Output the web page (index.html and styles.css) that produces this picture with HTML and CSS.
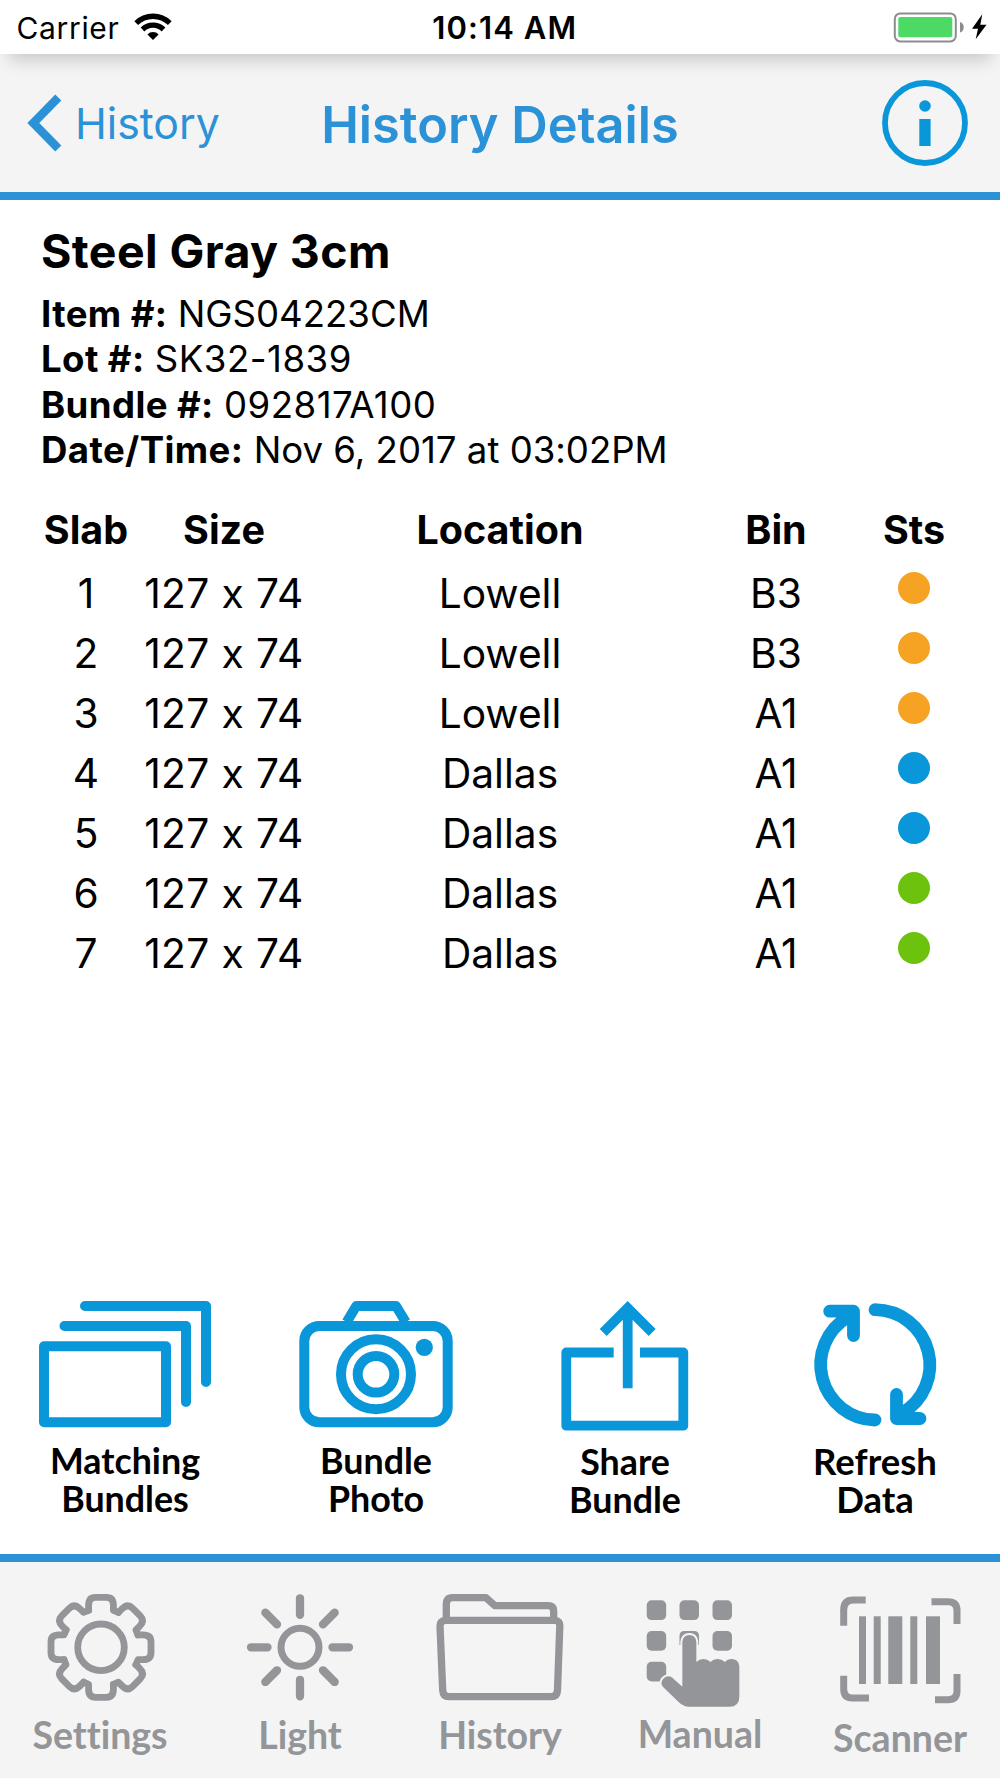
FILE: index.html
```
<!DOCTYPE html>
<html lang="en">
<head>
    <meta charset="UTF-8">
    <meta name="viewport" content="width=device-width, initial-scale=1.0">
    <title>History Details</title>
    <link rel="stylesheet" href="styles.css">
</head>
<body>
    <div class="status-bar">
        <div class="carrier">
            <span>Carrier</span>
            <svg class="wifi" width="40" height="28" viewBox="0 0 40 28">
                <path d="M3.2 10.2a23.8 23.8 0 0 1 33.6 0M9.5 16.5a14.9 14.9 0 0 1 21 0" fill="none" stroke="#000" stroke-width="5.3"/>
                <path d="M20 27l-5.6-5.6a7.9 7.9 0 0 1 11.2 0z"/>
            </svg>
        </div>
        <div class="time">10:14 AM</div>
        <svg class="battery" width="100" height="34" viewBox="0 0 100 34">
            <rect x="2.8" y="3.4" width="61" height="28" rx="5.5" fill="#fff" stroke="#8e8b8f" stroke-width="2"/>
            <rect x="6.3" y="7" width="54" height="20.3" rx="2" fill="#4cd964"/>
            <path d="M68 12c5 1.5 5 9 0 10.5z" fill="#8e8b8f"/>
            <path d="M90.3 4.3L80 18.7h6L83.7 29.3L94.5 14.7h-6.2z"/>
        </svg>
    </div>

    <header class="navbar">
        <a class="back">
            <svg width="40" height="60" viewBox="0 0 40 60">
                <path d="M34.3 4.6L9.3 30L34.3 55.4" fill="none" stroke="#2c92d8" stroke-width="8.5"/>
            </svg>
            <span>History</span>
        </a>
        <h1>History Details</h1>
        <svg class="info" width="86" height="86" viewBox="0 0 86 86">
            <circle cx="43" cy="43" r="40" fill="none" stroke="#0a97da" stroke-width="5.8"/>
            <circle cx="43" cy="26" r="5.8" fill="#0a97da"/>
            <rect x="37.3" y="39" width="11.3" height="27" fill="#0a97da"/>
        </svg>
    </header>

    <main>
        <section class="bundle">
            <h2>Steel Gray 3cm</h2>
            <p><b>Item #:</b> NGS04223CM</p>
            <p><b>Lot #:</b> <span class="digits">SK32-1839</span></p>
            <p><b>Bundle #:</b> <span class="digits">092817A100</span></p>
            <p><b>Date/Time:</b> Nov 6, 2017 at 03:02PM</p>
        </section>

        <table class="slabs">
            <thead>
                <tr>
                    <th class="narrow">Slab</th>
                    <th class="medium">Size</th>
                    <th>Location</th>
                    <th class="medium">Bin</th>
                    <th class="narrow">Sts</th>
                </tr>
            </thead>
            <tbody>
                <tr><td>1</td><td class="size">127 x 74</td><td>Lowell</td><td>B3</td><td><span class="dot orange"></span></td></tr>
                <tr><td>2</td><td class="size">127 x 74</td><td>Lowell</td><td>B3</td><td><span class="dot orange"></span></td></tr>
                <tr><td>3</td><td class="size">127 x 74</td><td>Lowell</td><td>A1</td><td><span class="dot orange"></span></td></tr>
                <tr><td>4</td><td class="size">127 x 74</td><td>Dallas</td><td>A1</td><td><span class="dot blue"></span></td></tr>
                <tr><td>5</td><td class="size">127 x 74</td><td>Dallas</td><td>A1</td><td><span class="dot blue"></span></td></tr>
                <tr><td>6</td><td class="size">127 x 74</td><td>Dallas</td><td>A1</td><td><span class="dot green"></span></td></tr>
                <tr><td>7</td><td class="size">127 x 74</td><td>Dallas</td><td>A1</td><td><span class="dot green"></span></td></tr>
            </tbody>
        </table>

        <div class="actions">
            <a class="action">
                <svg viewBox="0 0 176 132" stroke-width="10" stroke-linecap="round" stroke-linejoin="round">
                    <path d="M48 6H169V82"/>
                    <path d="M27.5 26H149V102"/>
                    <rect x="7" y="46.3" width="122" height="76"/>
                </svg>
                <span>Matching<br>Bundles</span>
            </a>
            <a class="action photo">
                <svg viewBox="0 0 176 132" stroke-width="10">
                    <path d="M58.7 22L68.3 6H108L117.7 22" stroke-linejoin="round"/>
                    <rect x="16.3" y="26" width="143.4" height="96.3" rx="15"/>
                    <circle cx="88" cy="74.3" r="35"/>
                    <circle cx="88" cy="74.3" r="18.3"/>
                    <circle class="solid" cx="136.3" cy="47.3" r="8.6"/>
                </svg>
                <span>Bundle<br>Photo</span>
            </a>
            <a class="action share">
                <svg viewBox="0 0 176 132" stroke-width="9.8">
                    <path d="M76.7 52.5H29.3V125.7H146.3V52.5H103" stroke-linejoin="round"/>
                    <path d="M90.7 9V88.3M66.2 32.5L90.7 8L115.2 32.5"/>
                </svg>
                <span>Share<br>Bundle</span>
            </a>
            <a class="action refresh">
                <svg viewBox="0 0 176 132" stroke-width="12.8" stroke-linecap="round" stroke-linejoin="round">
                    <path d="M88 9.7A55.3 55.3 0 0 1 115 113M109.5 94.5V118.5H133"/>
                    <path d="M88 120A55.3 55.3 0 0 1 61 17M42.7 11.2H66.5V35.5"/>
                </svg>
                <span>Refresh<br>Data</span>
            </a>
        </div>
    </main>

    <nav class="tabs">
        <a class="tab">
            <svg viewBox="0 0 140 120" stroke-width="6.8" stroke-linecap="round" stroke-linejoin="round">
                <defs>
                    <path id="tooth" d="M-12.4-37V-42Q-12.4-50-5.5-50H5.5Q12.4-50 12.4-42V-37L17.4-34.9"/>
                </defs>
                <g transform="translate(71 57.3)">
                    <circle r="23.3"/>
                    <use href="#tooth"/>
                    <use href="#tooth" transform="rotate(45)"/>
                    <use href="#tooth" transform="rotate(90)"/>
                    <use href="#tooth" transform="rotate(135)"/>
                    <use href="#tooth" transform="rotate(180)"/>
                    <use href="#tooth" transform="rotate(225)"/>
                    <use href="#tooth" transform="rotate(270)"/>
                    <use href="#tooth" transform="rotate(315)"/>
                </g>
            </svg>
            <span>Settings</span>
        </a>
        <a class="tab">
            <svg viewBox="0 0 140 120" stroke-width="8.3" stroke-linecap="round">
                <g transform="translate(70 57.3)">
                    <circle r="19" stroke-width="7"/>
                    <path d="M0-49V-32.5M0 49V32.5M-49 0H-32.5M49 0H32.5"/>
                    <path d="M0-49V-32.5M0 49V32.5M-49 0H-32.5M49 0H32.5" transform="rotate(45)"/>
                </g>
            </svg>
            <span>Light</span>
        </a>
        <a class="tab">
            <svg viewBox="0 0 140 120" stroke-width="7.3" stroke-linejoin="round">
                <path d="M16.3 29V14Q16.3 7.7 22 7.7H56L65 15.7H118Q123.7 15.7 123.7 21V29"/>
                <path d="M15.5 30.3H124.5Q130 30.3 129.8 36L127.5 100Q127.3 106.7 121 106.7H19Q13 106.7 12.7 100L10 36Q10 30.3 15.5 30.3Z"/>
            </svg>
            <span>History</span>
        </a>
        <a class="tab manual">
            <svg class="filled" viewBox="0 0 140 120">
                <rect x="16.7" y="10.3" width="19.5" height="19.8" rx="5"/>
                <rect x="49.5" y="10.3" width="19.5" height="19.8" rx="5"/>
                <rect x="82.5" y="10.3" width="19.5" height="19.8" rx="5"/>
                <rect x="16.7" y="41" width="19.5" height="19.8" rx="5"/>
                <path d="M49.5 55V46Q49.5 41 54.5 41H64Q69 41 69 46V55Z"/>
                <rect x="82.5" y="41" width="19.5" height="19.8" rx="5"/>
                <rect x="16.7" y="71.7" width="19.5" height="19.8" rx="5"/>
                <path class="hand" transform="scale(.33333) translate(-690 -150)" d="M847 440L817 413Q803 403 790 416Q778 430 790 442L835 485Q850 500 868 500H988Q1018 500 1018 470V378Q1015 357 995 357Q982 357 975 366Q965 357 953 357Q940 357 932 366Q922 357 910 357Q898 357 889 366V306Q887 285 868 285Q849 285 847 306Z"/>
            </svg>
            <span>Manual</span>
        </a>
        <a class="tab scanner">
            <svg viewBox="0 0 140 120" stroke-width="7">
                <path d="M13.7 35.7V20Q13.7 10 23 10H35.7"/>
                <path d="M101.5 11.7H118Q127 11.7 127 20.5V34"/>
                <path d="M13.7 85.7V99Q13.7 108 22.5 108H39"/>
                <path d="M105 109.7H118Q127 109.7 127 101V84"/>
                <g class="solid">
                    <rect x="29" y="26.3" width="7" height="67.7"/>
                    <rect x="43.7" y="26.3" width="7" height="67.7"/>
                    <rect x="58.3" y="26.3" width="14" height="67.7"/>
                    <rect x="80.3" y="26.3" width="7" height="67.7"/>
                    <rect x="96" y="26.3" width="14" height="67.7"/>
                </g>
            </svg>
            <span>Scanner</span>
        </a>
    </nav>
</body>
</html>
```
FILE: styles.css
```
* {
    box-sizing: border-box;
}

body {
    display: flex;
    flex-direction: column;
    height: 1778px;
    margin: 0;
    background: #fff;
    color: #000;
    font-family: Inter, "Liberation Sans", sans-serif;
    font-variant-ligatures: none;
}

svg {
    display: block;
    flex: none;
}

.status-bar {
    display: grid;
    grid-template-columns: 1fr auto 1fr;
    align-items: center;
    position: relative;
    z-index: 1;
    height: 54px;
    padding: 1px 8px 0 16.5px;
    background: #fff;
    box-shadow: 0 14px 18px -9px rgba(0, 0, 0, 0.2);
}

.carrier {
    display: flex;
    align-items: center;
    gap: 14px;
    font-size: 30px;
    letter-spacing: 0.65px;
}

.wifi {
    margin-bottom: 2px;
}

.time {
    padding-left: 1px;
    font-size: 31px;
    font-weight: 600;
    letter-spacing: 1.1px;
}

.battery {
    justify-self: end;
    margin-bottom: 1px;
}

.navbar {
    display: grid;
    grid-template-columns: 1fr auto 1fr;
    align-items: center;
    height: 146px;
    padding: 3px 32px 0 24px;
    background: #f4f4f4;
    border-bottom: 8px solid #2c92d8;
    color: #2c92d8;
}

.back {
    display: flex;
    align-items: center;
    gap: 11px;
    font-size: 42.8px;
}

.back span {
    margin-top: -2px;
}

.back svg,
.info {
    margin-bottom: 4px;
}

.navbar h1 {
    margin: 0 0 0 8px;
    font-size: 50.5px;
    font-weight: 600;
}

.info {
    justify-self: end;
}

main {
    display: flex;
    flex-direction: column;
    flex: 1;
    padding-top: 21px;
}

.bundle {
    padding: 0 41px;
}

.bundle h2 {
    margin: 0 0 11px;
    font-size: 46.5px;
    line-height: 60px;
    letter-spacing: 0.4px;
}

.bundle p {
    margin: 0;
    font-size: 36.6px;
    line-height: 45.33px;
}

.bundle b {
    letter-spacing: 0.4px;
}

.digits {
    letter-spacing: 0.5px;
}

.slabs {
    width: 928px;
    margin: 24px auto 0;
    table-layout: fixed;
    border-collapse: collapse;
    font-size: 40.7px;
    text-align: center;
}

.slabs th {
    height: 66px;
    padding: 0 0 1px;
    font-size: 39.5px;
}

.slabs td {
    height: 60px;
    padding: 0;
}

.slabs .size {
    letter-spacing: 0.4px;
}

.narrow {
    width: 100px;
}

.medium {
    width: 176px;
}

.dot {
    display: block;
    width: 32px;
    height: 32px;
    margin: 0 auto 10px;
    border-radius: 50%;
}

.orange {
    background: #f6a223;
}

.blue {
    background: #0a97da;
}

.green {
    background: #6cc20c;
}

.actions {
    display: grid;
    grid-template-columns: repeat(4, 1fr);
    margin-top: auto;
    padding-bottom: 35px;
    color: #0a97da;
}

.action,
.tab {
    display: flex;
    flex-direction: column;
    align-items: center;
    font-family: Lato, "Liberation Sans", sans-serif;
    font-weight: 700;
    text-align: center;
}

.action svg,
.tab svg {
    fill: none;
    stroke: currentColor;
}

.action svg {
    width: 176px;
    height: 132px;
    margin-bottom: 10px;
}

.action span {
    color: #000;
    font-size: 35.8px;
    line-height: 38px;
}

.photo {
    padding-left: 2px;
}

.share span {
    padding-top: 1px;
}

.refresh span {
    font-size: 36.5px;
}

.action .solid,
.tab .solid,
.tab .filled {
    fill: currentColor;
    stroke: none;
}

.tabs {
    display: grid;
    grid-template-columns: repeat(5, 1fr);
    height: 224px;
    padding-top: 28px;
    background: #f4f4f4;
    border-top: 8px solid #2c92d8;
    color: #939598;
}

.tab svg {
    width: 140px;
    height: 120px;
}

.tab span {
    margin-top: 2px;
    font-size: 37.5px;
    line-height: 46px;
}

.manual span {
    margin-top: 1px;
}

.scanner span {
    margin-top: 5px;
}

.hand {
    stroke: #f4f4f4;
    stroke-width: 12px;
    paint-order: stroke;
}
```
